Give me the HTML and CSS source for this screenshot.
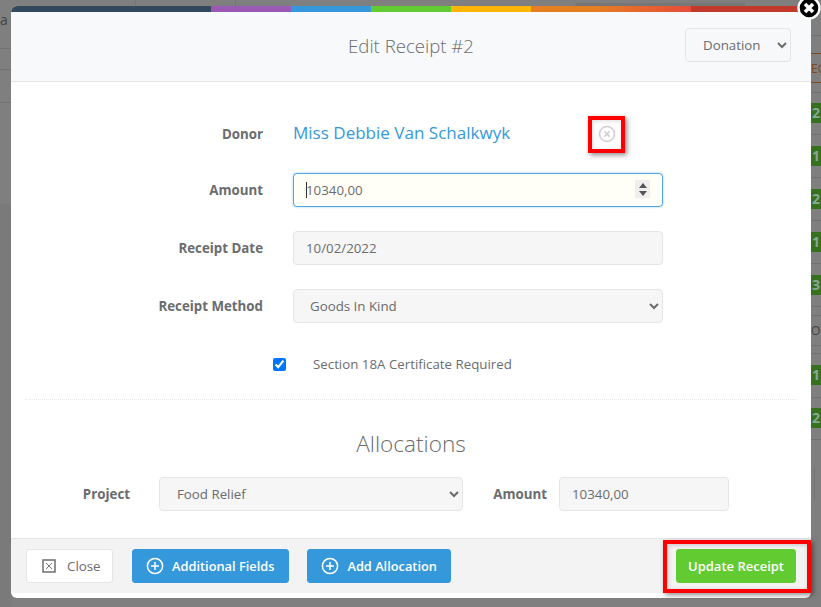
FILE: index.html
```html
<!DOCTYPE html>
<html lang="en">
<head>
<meta charset="utf-8">
<title>Edit Receipt #2</title>
<link rel="stylesheet" href="styles.css">
</head>
<body>
<div class="backdrop">
  <span class="bg-text bg-a">a</span>
  <span class="bg-top bg-t1"></span>
  <span class="bg-top bg-t2"></span>
  <span class="bg-top bg-t3"></span>
  <span class="bg-lower"></span>
  <span class="bg-rule bg-l1"></span>
  <span class="bg-rule bg-l2"></span>
  <span class="bg-rule bg-l3"></span>
  <span class="bg-rule bg-brown bg-b1"></span>
  <span class="bg-rule bg-brown bg-b2"></span>
  <span class="bg-rule bg-r1"></span>
  <span class="bg-rule bg-r2"></span>
  <span class="bg-rule bg-r3"></span>
  <span class="bg-rule bg-r4"></span>
  <span class="bg-rule bg-r5"></span>
  <span class="bg-rule bg-r6"></span>
  <span class="bg-rule bg-r7"></span>
  <span class="bg-rule bg-r8"></span>
  <span class="bg-rule bg-r9"></span>
  <span class="bg-rule bg-r10"></span>
  <span class="bg-rule bg-r11"></span>
  <span class="bg-rule bg-r12"></span>
  <span class="bg-tick"></span>
  <span class="bg-cell bg-c1">2</span>
  <span class="bg-cell bg-c2">1</span>
  <span class="bg-cell bg-c3">2</span>
  <span class="bg-cell bg-c4">1</span>
  <span class="bg-cell bg-c5">3</span>
  <span class="bg-cell bg-c6">1</span>
  <span class="bg-cell bg-c7">2</span>
  <span class="bg-text bg-ec">EC</span>
  <span class="bg-text bg-ot">OT</span>
</div>
<main class="modal">
  <div class="stripes">
    <i class="s1"></i><i class="s2"></i><i class="s3"></i><i class="s4"></i><i class="s5"></i><i class="s6"></i><i class="s8"></i>
  </div>
  <header class="head">
    <h1 class="title">Edit Receipt #2</h1>
    <select class="control type-select"><option>Donation</option></select>
  </header>
  <section class="body">
    <div class="row donor-row">
      <label class="lbl">Donor</label>
      <a class="donor-name">Miss Debbie Van Schalkwyk</a>
      <span class="clear-box">
        <svg width="18" height="18" viewBox="0 0 18 18" fill="none" stroke="#cfcfcf"><circle cx="9" cy="9" r="7.5" stroke-width="1.6"/><path d="M6.4 6.4l5.2 5.2M11.6 6.4l-5.2 5.2" stroke-width="1.6"/></svg>
      </span>
    </div>
    <div class="row amount-row">
      <label class="lbl">Amount</label>
      <div class="control focus"><span class="caret"></span>10340,00
        <span class="spin"><i class="up"></i><i class="down"></i></span>
      </div>
    </div>
    <div class="row date-row">
      <label class="lbl">Receipt Date</label>
      <div class="control">10/02/2022</div>
    </div>
    <div class="row method-row">
      <label class="lbl">Receipt Method</label>
      <select class="control sel"><option>Goods In Kind</option></select>
    </div>
    <div class="check-row">
      <input class="check" type="checkbox" checked>
      <span>Section 18A Certificate Required</span>
    </div>
    <hr class="rule">
    <h2 class="sub">Allocations</h2>
    <div class="alloc">
      <label class="lbl lbl-project">Project</label>
      <select class="control sel project"><option>Food Relief</option></select>
      <label class="lbl lbl-amount">Amount</label>
      <div class="control alloc-amount">10340,00</div>
    </div>
  </section>
  <footer class="foot">
    <button class="btn btn-close">
      <svg width="14" height="14" viewBox="0 0 14 14" fill="none" stroke="#777"><rect x="1" y="1" width="12" height="12" stroke-width="1.6"/><path d="M4 4l6 6M10 4l-6 6"/></svg>
      Close
    </button>
    <button class="btn btn-blue">
      <svg width="18" height="18" viewBox="0 0 18 18" fill="none" stroke="#fff" stroke-width="1.5"><circle cx="9" cy="9" r="7.6"/><path d="M9 5v8M5 9h8"/></svg>
      Additional Fields
    </button>
    <button class="btn btn-blue">
      <svg width="18" height="18" viewBox="0 0 18 18" fill="none" stroke="#fff" stroke-width="1.5"><circle cx="9" cy="9" r="7.6"/><path d="M9 5v8M5 9h8"/></svg>
      Add Allocation
    </button>
    <button class="btn btn-green">Update Receipt</button>
  </footer>
  <span class="callout callout-update"></span>
  <span class="close-x">
    <svg width="24" height="24" viewBox="0 0 24 24"><circle cx="12" cy="12" r="10.5" fill="#000" stroke="#fff" stroke-width="2.4"/><path d="M8 8l8 8M16 8l-8 8" stroke="#fff" stroke-width="3.6"/></svg>
  </span>
</main>
</body>
</html>
```
FILE: styles.css
```css
* { box-sizing: border-box; }
html, body { margin: 0; height: 100%; }
body { position: relative; width: 821px; height: 607px; overflow: hidden; background: #7f7f7f; font-family: "Open Sans", "Liberation Sans", sans-serif; color: #6b6d70; font-size: 13.3px; }

.backdrop { position: absolute; inset: 0; background: #7f7f7f; }
.bg-top { position: absolute; top: 0; height: 6px; }
.bg-t1 { left: 135px; width: 1px; background: #747474; }
.bg-t2 { left: 235px; width: 1px; background: #747474; }
.bg-t3 { left: 575px; width: 170px; top: 3px; height: 3px; background: #767676; border-radius: 3px 0 0 0; }
.bg-lower { position: absolute; left: 0; top: 204px; width: 11px; bottom: 0; background: #7a7a7a; }
.bg-rule { position: absolute; background: #727272; height: 1px; left: 811px; width: 10px; }
.bg-l1 { left: 0; width: 11px; top: 48px; }
.bg-l2 { left: 0; width: 11px; top: 69px; }
.bg-l3 { left: 0; width: 11px; top: 102px; }
.bg-brown { background: #7d4a20; }
.bg-b1 { top: 53px; }
.bg-b2 { top: 82px; }
.bg-r1 { top: 35px; }
.bg-r2 { top: 92px; }
.bg-r3 { top: 134px; }
.bg-r4 { top: 177px; }
.bg-r5 { top: 220px; }
.bg-r6 { top: 263px; }
.bg-r7 { top: 306px; }
.bg-r8 { top: 315px; }
.bg-r9 { top: 345px; }
.bg-r10 { top: 353px; }
.bg-r11 { top: 397px; }
.bg-r12 { top: 439px; }
.bg-tick { position: absolute; left: 814px; top: 467px; width: 1px; height: 33px; background: #727272; }
.bg-cell { position: absolute; left: 811px; width: 10px; height: 20px; background: #36721d; color: #8fa39a; font-weight: 700; font-size: 14px; line-height: 20px; padding-left: 1px; overflow: hidden; }
.bg-c1 { top: 103px; }
.bg-c2 { top: 146px; }
.bg-c3 { top: 189px; }
.bg-c4 { top: 232px; }
.bg-c5 { top: 275px; }
.bg-c6 { top: 365px; }
.bg-c7 { top: 408px; }
.bg-text { position: absolute; color: #444; font-size: 14px; overflow: hidden; }
.bg-a { left: 0; top: 10px; width: 11px; }
.bg-ec { left: 811px; top: 60px; width: 10px; color: #7a4a25; font-size: 12px; }
.bg-ot { left: 811px; top: 322px; width: 10px; font-size: 12px; }

.modal { position: absolute; left: 11px; top: 6px; width: 800px; height: 592px; background: #fff; border-radius: 6px; display: flex; flex-direction: column; }
.stripes { display: flex; height: 6px; flex: none; border-radius: 6px 6px 0 0; overflow: hidden; }
.stripes i { display: block; width: 80px; }
.stripes .s1 { width: 200px; background: #34495e; }
.stripes .s2 { background: #9b59b6; }
.stripes .s3 { background: #3498db; }
.stripes .s4 { background: #62cb31; }
.stripes .s5 { background: #ffb606; }
.stripes .s6 { width: 160px; background: linear-gradient(90deg, #e67e22 40%, #e74c3c 100%); }
.stripes .s8 { width: 120px; background: #c0392b; }

.head { height: 70px; flex: none; background: #f7f9fa; border-bottom: 1px solid #e4e5e7; position: relative; display: flex; align-items: center; justify-content: center; }
.title { margin: 0 0 3px; font-weight: 300; font-size: 18.6px; color: #6a6c6f; }

.control { display: block; width: 370px; height: 34px; border: 1px solid #e4e5e7; border-radius: 4px; background: #f6f6f6; color: #6a6c6f; font: 400 13.3px "Open Sans", sans-serif; line-height: 32px; padding: 0 12px; }
.type-select { position: absolute; right: 20px; top: 16px; width: 106px; height: 34px; padding-left: 13px; background: #f7f8f9; }
.body { flex: 1; padding-top: 34px; }
.row { display: flex; align-items: center; height: 34px; }
.lbl { display: block; width: 252px; text-align: right; font-weight: 700; font-size: 13.3px; color: #6a6c6f; margin-right: 30px; flex: none; }
.donor-row { height: 36px; }
.donor-name { color: #3498db; font-size: 17.05px; width: 295px; margin-bottom: 3px; }
.amount-row { margin-top: 21px; }
.date-row { margin-top: 24px; }
.method-row { margin-top: 24px; }
.clear-box { display: flex; width: 37px; height: 37px; border: 4px solid #f00; align-items: center; justify-content: center; box-shadow: 2px 2px 5px rgba(0,0,0,.45), inset 1px 1px 4px rgba(0,0,0,.15); }

.focus { background: #fffff8; border-color: #55a5e6; position: relative; box-shadow: 0 0 2px rgba(52,152,219,.6); }
.caret { position: absolute; left: 12px; top: 8px; width: 1px; height: 16px; background: #333; }
.spin { position: absolute; right: 12px; top: 6px; width: 15px; height: 18px; background: #efefef; display: flex; flex-direction: column; align-items: center; justify-content: center; gap: 3px; }
.spin i { width: 0; height: 0; border-left: 4px solid transparent; border-right: 4px solid transparent; }
.spin .up { border-bottom: 5px solid #555; }
.spin .down { border-top: 5px solid #555; }

.check-row { display: flex; align-items: center; margin-top: 29px; padding-left: 262px; height: 24px; }
.check { width: 13px; height: 13px; margin: 0 27px 0 0; accent-color: #0075ff; }
.rule { margin: 23px 14px 0; border: 0; border-top: 1px dotted #e9e9e9; }
.sub { margin: 28px 0 0; text-align: center; font-weight: 300; font-size: 22.6px; color: #6a6c6f; line-height: 32px; }
.alloc { display: flex; align-items: center; margin-top: 17px; }
.lbl-project { width: 119px; margin-right: 29px; }
.project { width: 304px; padding-left: 13px; }
.lbl-amount { width: 84px; margin-right: 12px; }
.alloc-amount { width: 170px; }

.foot { flex: none; height: 55px; background: #f3f3f3; border-top: 1px solid #e4e5e7; margin-bottom: 5px; display: flex; align-items: center; padding: 0 15px; }
.btn { height: 34px; border: 1px solid #3498db; border-radius: 3px; font: 600 12.8px "Open Sans", sans-serif; color: #fff; display: inline-flex; align-items: center; gap: 8px; padding: 0 13.5px; margin-right: 18px; background: #3498db; }
.btn-close { background: #fff; border-color: #e4e5e7; color: #6a6c6f; font-weight: 400; font-size: 13.3px; margin-right: 19px; padding: 0 11px 0 15px; gap: 11px; }
.btn-green { width: 120px; justify-content: center; padding: 0; background: #62cb31; border-color: #62cb31; margin: 0 0 0 auto; font-size: 13px; }

.callout { position: absolute; border: 4px solid #f00; box-shadow: 2px 2px 5px rgba(0,0,0,.45), inset 1px 1px 4px rgba(0,0,0,.2); pointer-events: none; }
.callout-update { left: 652px; top: 534px; width: 148px; height: 53px; }
.close-x { position: absolute; left: 786px; top: -10px; width: 24px; height: 24px; }
```
